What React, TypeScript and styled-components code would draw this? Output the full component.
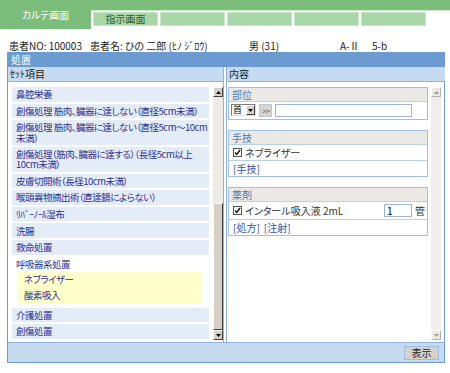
import React from "react";
import styled, { createGlobalStyle } from "styled-components";

const GlobalStyle = createGlobalStyle`
  html, body { margin: 0; padding: 0; background: #fff; }
  body {
    font-family: "Noto Sans CJK JP", "Noto Sans", sans-serif;
    font-size: 10px;
    font-feature-settings: "palt";
    color: #222;
  }
`;

const green = "#7dbd7b";
const blueLine = "#6b9bd0";
const softLine = "#9fc0e4";

const Page = styled.div`
  width: 450px;
  height: 373px;
  overflow: hidden;
`;

const TabStrip = styled.div`
  display: flex;
  align-items: flex-start;
  height: 29px;
  background: linear-gradient(
    to bottom,
    ${green} 0,
    ${green} 10px,
    #d3ead2 10px,
    #d3ead2 11px,
    transparent 11px
  );
`;

const ActiveTab = styled.div`
  width: 91px;
  height: 29px;
  background: ${green};
  color: #fff;
  display: flex;
  align-items: center;
  justify-content: center;
  font-size: 10px;
`;

const Tab = styled.div`
  box-sizing: border-box;
  width: 65px;
  height: 14px;
  margin: 12px 0 0 2px;
  background: #a9d6a6;
  border: 1px solid #cae6c8;
  color: #2f5e2c;
  font-size: 10px;
  line-height: 12px;
  text-align: center;
`;

const InfoRow = styled.div`
  display: grid;
  grid-template-columns: 81px 159px 91px 32px auto;
  align-items: end;
  height: 23px;
  padding-left: 9px;
  line-height: 12px;
  box-sizing: border-box;
  color: #222;
  white-space: nowrap;
`;

const Frame = styled.div`
  margin-left: 7px;
  width: 438px;
  box-sizing: border-box;
  border: 1px solid ${blueLine};
`;

const FrameHead = styled.div`
  height: 14px;
  line-height: 14px;
  background: ${blueLine};
  color: #fff;
  padding-left: 3px;
`;

const Columns = styled.div`
  display: flex;
  background: #fff;
`;

const LeftCol = styled.div`
  width: 216px;
  box-sizing: border-box;
  border-right: 1px solid #8db3dc;
  display: flex;
  flex-direction: column;
`;

const RightCol = styled.div`
  flex: 1;
  margin-left: 2px;
  border-left: 1px solid #8db3dc;
  display: flex;
  flex-direction: column;
`;

const SubHead = styled.div`
  height: 14px;
  line-height: 14px;
  background: #c6daf0;
  border-bottom: 1px solid #8db3dc;
  padding-left: 2px;
  color: #222;
`;

const ColBody = styled.div<{ $padLeft: number; $gap: number; $padRight: number }>`
  height: 260px;
  box-sizing: border-box;
  display: flex;
  padding: 5px ${(p) => p.$padRight}px 2px ${(p) => p.$padLeft}px;
  gap: ${(p) => p.$gap}px;
`;

const List = styled.div`
  width: 197px;
  display: flex;
  flex-direction: column;
  gap: 2px;
  overflow: hidden;
  font-size: 9.5px;
  letter-spacing: -0.5px;
`;

const Item = styled.div`
  flex-shrink: 0;
  background: #e4ecf7;
  color: #2e2f8f;
  padding: 2.2px 4px;
  line-height: 10.2px;
  white-space: pre;
`;

const Group = styled.div`
  flex-shrink: 0;
`;

const GroupTitle = styled.div`
  color: #2e2f8f;
  padding: 1px 4px 0;
  line-height: 13px;
`;

const SubList = styled.div`
  display: flex;
  flex-direction: column;
  gap: 1px;
  margin: 1px 7px 3px 6px;
`;

const SubItem = styled.div`
  background: #ffffcc;
  color: #2e2f8f;
  padding: 1.5px 6px;
  line-height: 12px;
`;

const ScrollBar = styled.div<{ $disabled?: boolean }>`
  width: 10px;
  flex-shrink: 0;
  display: flex;
  flex-direction: column;
  background: ${(p) => (p.$disabled ? "#efeeea" : "#edebe6")};
`;

const ScrollBtn = styled.div<{ $disabled?: boolean }>`
  height: 10px;
  box-sizing: border-box;
  background: ${(p) => (p.$disabled ? "#ebe9e4" : "#d4d0c8")};
  border: 1px solid;
  border-color: #fff ${(p) => (p.$disabled ? "#b5b2ab" : "#404040")}
    ${(p) => (p.$disabled ? "#b5b2ab" : "#404040")} #fff;
  display: flex;
  align-items: center;
  justify-content: center;
`;

const ScrollGap = styled.div`
  flex: 1;
`;

const Thumb = styled.div`
  box-sizing: border-box;
  background: #d4d0c8;
  border: 1px solid;
  border-color: #fff #404040 #404040 #fff;
`;

const Arrow = ({ down, disabled }: { down?: boolean; disabled?: boolean }) => (
  <svg width="5" height="3" viewBox="0 0 5 3">
    <polygon
      points={down ? "0,0 5,0 2.5,3" : "0,3 5,3 2.5,0"}
      fill={disabled ? "#a19e97" : "#000"}
    />
  </svg>
);

const Boxes = styled.div`
  width: 200px;
  display: flex;
  flex-direction: column;
  gap: 10px;
`;

const Box = styled.div<{ $minHeight?: number }>`
  box-sizing: border-box;
  border: 1px solid ${softLine};
  min-height: ${(p) => p.$minHeight ?? 0}px;
`;

const BoxHead = styled.div`
  height: 13px;
  line-height: 13px;
  background: #ebe9e6;
  color: #4a7db3;
  padding-left: 3px;
  border-bottom: 1px solid #b9d0ea;
`;

const BoxRow = styled.div<{ $line?: boolean; $tall?: boolean }>`
  display: flex;
  align-items: center;
  height: ${(p) => (p.$tall ? 17 : 15)}px;
  padding: 0 2px 0 4px;
  border-bottom: ${(p) => (p.$line ? "1px solid #b9d0ea" : "none")};
  color: #333;
  gap: 2px;
`;

const ControlRow = styled.div`
  display: flex;
  align-items: center;
  height: 16px;
  padding-left: 2px;
  gap: 3px;
`;

const Select = styled.div`
  width: 25px;
  height: 12px;
  box-sizing: border-box;
  border: 1px solid;
  border-color: #7a7a7a #e0e0e0 #e0e0e0 #7a7a7a;
  background: #fff;
  display: flex;
  align-items: stretch;
  font-size: 9px;
  line-height: 10px;
`;

const SelectText = styled.span`
  flex: 1;
  padding-left: 1px;
  color: #000;
`;

const SelectBtn = styled.span`
  width: 9px;
  box-sizing: border-box;
  background: #d4d0c8;
  border: 1px solid;
  border-color: #fff #404040 #404040 #fff;
  display: flex;
  align-items: center;
  justify-content: center;
`;

const SquareBtn = styled.div`
  width: 13px;
  height: 13px;
  box-sizing: border-box;
  background: #d9d5ce;
  border: 1px solid #b6c9df;
  color: #555;
  font-size: 8px;
  line-height: 11px;
  text-align: center;
  letter-spacing: -1px;
`;

const TextInput = styled.div<{ $width: number }>`
  width: ${(p) => p.$width}px;
  height: 13px;
  box-sizing: border-box;
  border: 1px solid #9cb7d6;
  background: #fff;
  color: #000;
  line-height: 11px;
  padding-left: 2px;
`;

const Check = styled.span`
  width: 9px;
  height: 9px;
  box-sizing: border-box;
  border: 1px solid #555;
  background: #fff;
  display: inline-flex;
  align-items: center;
  justify-content: center;
  margin-right: 1px;
`;

const Label = styled.span`
  flex: 1;
  white-space: nowrap;
`;

const Link = styled.span`
  color: #3851a8;
  margin-right: 2px;
`;

const Unit = styled.span`
  margin-left: 1px;
`;

const BottomBar = styled.div`
  height: 19px;
  background: #c6daf0;
  border-top: 1px solid #8db3dc;
  display: flex;
  align-items: center;
  justify-content: flex-end;
  padding-right: 5px;
`;

const Button = styled.div`
  width: 35px;
  height: 14px;
  box-sizing: border-box;
  background: #d6d2cb;
  border: 1px solid #9cbde2;
  color: #222;
  line-height: 12px;
  text-align: center;
`;

const Tick = () => (
  <svg width="7" height="7" viewBox="0 0 7 7">
    <polyline points="1,3.5 2.8,5.5 6,1" fill="none" stroke="#111" strokeWidth="1.4" />
  </svg>
);

const items = [
  "鼻腔栄養",
  "創傷処理 筋肉、臓器に達しない（直径5cm未満）",
  "創傷処理 筋肉、臓器に達しない（直径5cm～10cm\n未満）",
  "創傷処理（筋肉、臓器に達する）（長径5cm以上\n10cm未満）",
  "皮膚切開術（長径10cm未満）",
  "喉頭異物摘出術（直達鏡によらない）",
  "ﾘﾊﾞｰﾉｰﾙ湿布",
  "洗腸",
  "救命処置",
];

export default function App() {
  return (
    <Page>
      <GlobalStyle />
      <TabStrip>
        <ActiveTab>カルテ画面</ActiveTab>
        <Tab>指示画面</Tab>
        <Tab />
        <Tab />
        <Tab />
        <Tab />
      </TabStrip>

      <InfoRow>
        <span>患者NO: 100003</span>
        <span>患者名: ひの 二郎 (ﾋﾉ ｼﾞﾛｳ)</span>
        <span>男 (31)</span>
        <span>A-Ⅱ</span>
        <span>5-b</span>
      </InfoRow>

      <Frame>
        <FrameHead>処置</FrameHead>
        <Columns>
          <LeftCol>
            <SubHead>ｾｯﾄ項目</SubHead>
            <ColBody $padLeft={4} $gap={4} $padRight={0}>
              <List>
                {items.map((t) => (
                  <Item key={t}>{t}</Item>
                ))}
                <Group>
                  <GroupTitle>呼吸器系処置</GroupTitle>
                  <SubList>
                    <SubItem>ネブライザー</SubItem>
                    <SubItem>酸素吸入</SubItem>
                  </SubList>
                </Group>
                <Item>介護処置</Item>
                <Item>創傷処置</Item>
              </List>
              <ScrollBar>
                <ScrollBtn>
                  <Arrow />
                </ScrollBtn>
                <ScrollGap />
                <Thumb style={{ height: 127 }} />
                <ScrollBtn>
                  <Arrow down />
                </ScrollBtn>
              </ScrollBar>
            </ColBody>
          </LeftCol>

          <RightCol>
            <SubHead>内容</SubHead>
            <ColBody $padLeft={1} $gap={3} $padRight={4}>
              <Boxes>
                <Box $minHeight={33}>
                  <BoxHead>部位</BoxHead>
                  <ControlRow>
                    <Select>
                      <SelectText>首</SelectText>
                      <SelectBtn>
                        <Arrow down />
                      </SelectBtn>
                    </Select>
                    <SquareBtn>&gt;&gt;</SquareBtn>
                    <TextInput $width={137} />
                  </ControlRow>
                </Box>
                <Box>
                  <BoxHead>手技</BoxHead>
                  <BoxRow $line>
                    <Check>
                      <Tick />
                    </Check>
                    <Label>ネブライザー</Label>
                  </BoxRow>
                  <BoxRow>
                    <Link>[手技]</Link>
                  </BoxRow>
                </Box>
                <Box>
                  <BoxHead>薬剤</BoxHead>
                  <BoxRow $line $tall>
                    <Check>
                      <Tick />
                    </Check>
                    <Label>インタール吸入液 2mL</Label>
                    <TextInput $width={28}>1</TextInput>
                    <Unit>管</Unit>
                  </BoxRow>
                  <BoxRow>
                    <Link>[処方]</Link>
                    <Link>[注射]</Link>
                  </BoxRow>
                </Box>
              </Boxes>
              <ScrollBar $disabled>
                <ScrollBtn $disabled>
                  <Arrow disabled />
                </ScrollBtn>
                <ScrollGap />
                <ScrollBtn $disabled>
                  <Arrow down disabled />
                </ScrollBtn>
              </ScrollBar>
            </ColBody>
          </RightCol>
        </Columns>
        <BottomBar>
          <Button>表示</Button>
        </BottomBar>
      </Frame>
    </Page>
  );
}
